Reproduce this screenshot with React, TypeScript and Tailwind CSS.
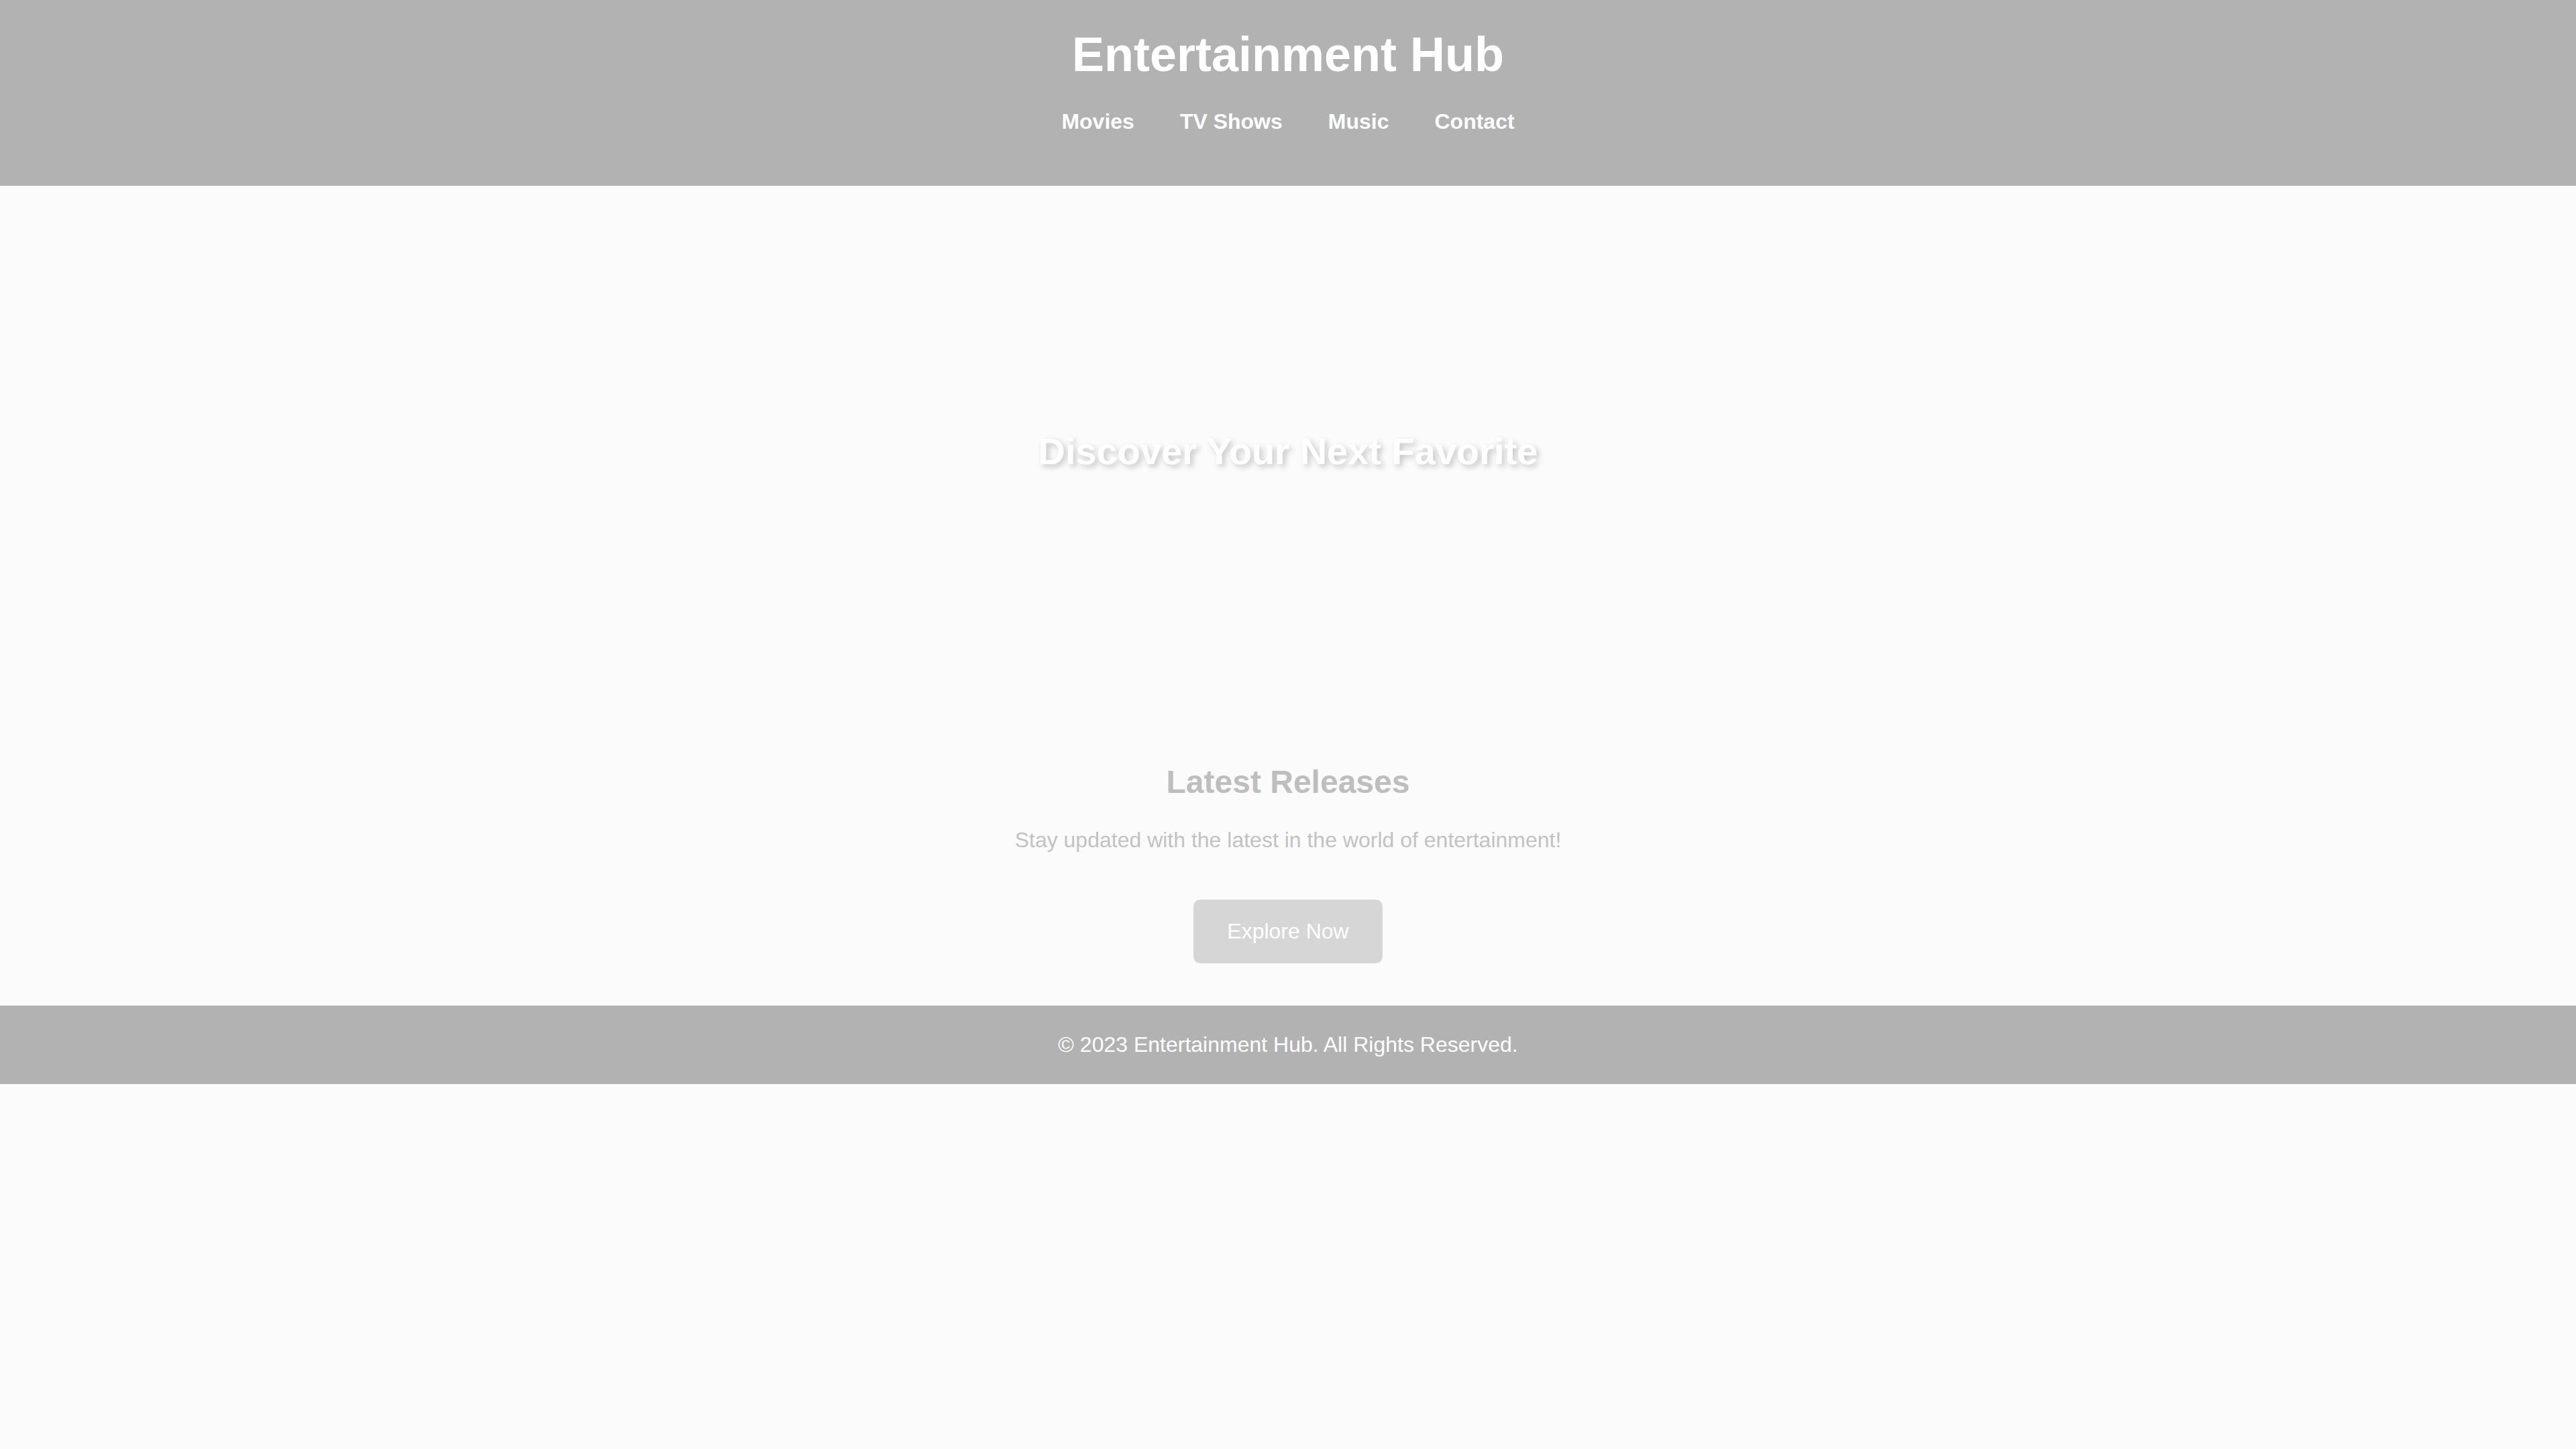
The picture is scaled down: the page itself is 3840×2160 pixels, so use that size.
import React from 'react';

const links = ['Movies', 'TV Shows', 'Music', 'Contact'];

const App: React.FC = () => {
  return (
    <div className="min-h-screen bg-[#fbfbfb] font-['Liberation_Sans',Arial,sans-serif]">
      {/* Header */}
      <header className="bg-[#b2b2b2] pt-[40px] pb-[77px] flex flex-col items-center text-white">
        <h1 className="text-[72px] font-bold leading-[normal]">Entertainment Hub</h1>
        <nav className="mt-[41px] flex gap-[68px]">
          {links.map((l) => (
            <a key={l} href="#" className="text-[32px] font-bold leading-[normal]">
              {l}
            </a>
          ))}
        </nav>
      </header>

      {/* Hero */}
      <section className="h-[790px] flex items-center justify-center">
        <h2 className="text-[56px] font-bold leading-[normal] text-white [text-shadow:4px_4px_8px_rgba(0,0,0,0.22)]">
          Discover Your Next Favorite
        </h2>
      </section>

      {/* Latest */}
      <section className="pt-[71px] pb-[63px] flex flex-col items-center">
        <h3 className="text-[48px] font-bold leading-[normal] text-[#bebebe]">Latest Releases</h3>
        <p className="mt-[41px] text-[32px] leading-[normal] text-[#c2c2c2]">
          Stay updated with the latest in the world of entertainment!
        </p>
        <button className="mt-[70px] bg-[#d6d6d6] text-white text-[32px] leading-[normal] px-[50px] py-[29px] rounded-[10px]">
          Explore Now
        </button>
      </section>

      {/* Footer */}
      <footer className="bg-[#b2b2b2] py-[40px] text-center text-white text-[32px] leading-[normal]">
        © 2023 Entertainment Hub. All Rights Reserved.
      </footer>
    </div>
  );
};

export default App;
